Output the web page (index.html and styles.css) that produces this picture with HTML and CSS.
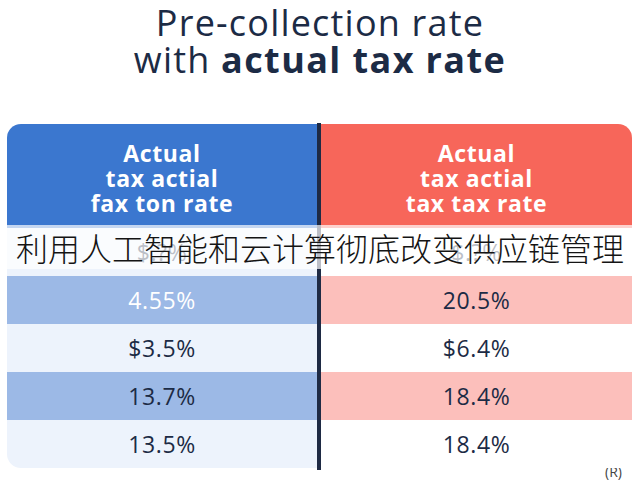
FILE: index.html
```html
<!DOCTYPE html>
<html lang="zh">
<head>
<meta charset="utf-8">
<link rel="stylesheet" href="styles.css">
</head>
<body>
<div class="page">
  <h1 class="title">
    <span class="line">Pre-collection rate</span>
    <span class="line">with <b>actual tax rate</b></span>
  </h1>
  <div class="table">
    <div class="col col-left">
      <div class="head head-blue">Actual<br>tax actial<br>fax ton rate</div>
      <div class="cell light-left">$.?%</div>
      <div class="cell blue-row white-text">4.55%</div>
      <div class="cell light-left">$3.5%</div>
      <div class="cell blue-row">13.7%</div>
      <div class="cell light-left">13.5%</div>
    </div>
    <div class="divider"></div>
    <div class="col col-right">
      <div class="head head-red">Actual<br>tax actial<br>tax tax rate</div>
      <div class="cell light-right">$.?%</div>
      <div class="cell pink-row">20.5%</div>
      <div class="cell light-right">$6.4%</div>
      <div class="cell pink-row">18.4%</div>
      <div class="cell light-right">18.4%</div>
    </div>
    <div class="band">利用人工智能和云计算彻底改变供应链管理</div>
  </div>
  <div class="mark">(R)</div>
</div>
</body>
</html>
```
FILE: styles.css
```css
html, body {
  margin: 0;
  padding: 0;
  background: #ffffff;
}
.page {
  width: 640px;
  height: 480px;
  overflow: hidden;
  font-family: "Open Sans", "Noto Sans", sans-serif;
  color: #1c2b45;
}
.title {
  margin: 0;
  padding-top: 4px;
  font-size: 36px;
  font-weight: 400;
  line-height: 37px;
  letter-spacing: 1.2px;
  text-align: center;
  color: #1c2b45;
}
.title .line {
  display: block;
}
.title b {
  font-weight: 700;
  letter-spacing: 1.4px;
}
.table {
  position: relative;
  display: flex;
  margin: 46px 8px 0 7px;
}
.col {
  display: flex;
  flex-direction: column;
}
.col-left {
  width: 310px;
  border-radius: 14px 0 0 14px;
  overflow: hidden;
}
.col-right {
  width: 311px;
  border-radius: 0 14px 0 0;
  overflow: hidden;
}
.divider {
  width: 4px;
  background: #1e2a44;
  margin: -1px 0 -2px;
}
.head {
  height: 104px;
  box-sizing: border-box;
  padding-top: 17px;
  font-size: 23px;
  font-weight: 700;
  line-height: 25px;
  letter-spacing: 0.6px;
  color: #ffffff;
  text-align: center;
}
.head-blue {
  background: #3b77cf;
}
.head-red {
  background: #f7665a;
}
.cell {
  height: 48px;
  display: flex;
  align-items: center;
  justify-content: center;
  font-size: 23px;
  letter-spacing: 0.6px;
  color: #1c2b45;
}
.light-left {
  background: #edf3fc;
}
.light-right {
  background: #ffffff;
}
.blue-row {
  background: #9cb9e6;
}
.pink-row {
  background: #fcbfbb;
}
.white-text {
  color: #ffffff;
}
.band {
  position: absolute;
  left: -7px;
  right: -8px;
  top: 101px;
  height: 44px;
  background: rgba(255, 255, 255, 0.7);
  font-family: "Noto Sans CJK SC", sans-serif;
  font-size: 32px;
  font-weight: 300;
  line-height: 44px;
  color: #141414;
  text-align: center;
  white-space: nowrap;
}
.mark {
  margin-top: -4px;
  padding-right: 18px;
  text-align: right;
  font-size: 14px;
  line-height: 16px;
  color: #444444;
}
```
